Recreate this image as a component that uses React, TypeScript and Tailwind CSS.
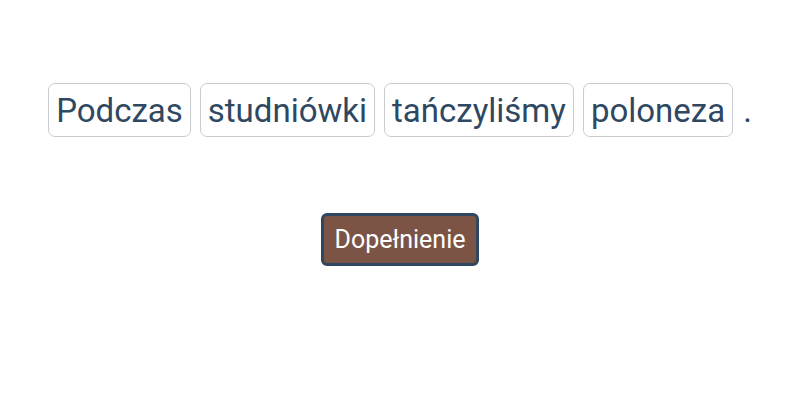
export default function App() {
  const words = ["Podczas", "studniówki", "tańczyliśmy", "poloneza"];
  return (
    <div className="w-[800px] h-[400px] bg-white flex flex-col items-center font-['Roboto',sans-serif] text-[#2f4862]">
      <div className="flex items-center gap-[9px] mt-[83px]">
        {words.map((w) => (
          <span
            key={w}
            className="h-[54px] px-[7px] flex items-center border border-[#c8ccd0] rounded-[7px] text-[33px] leading-none"
          >
            {w}
          </span>
        ))}
        <span className="text-[33px] leading-none ml-[1px]">.</span>
      </div>
      <button className="mt-[76px] h-[53px] px-[10px] bg-[#7b5446] border-[3px] border-[#2f4862] rounded-[6px] text-white text-[25px] leading-none">
        Dopełnienie
      </button>
    </div>
  );
}
